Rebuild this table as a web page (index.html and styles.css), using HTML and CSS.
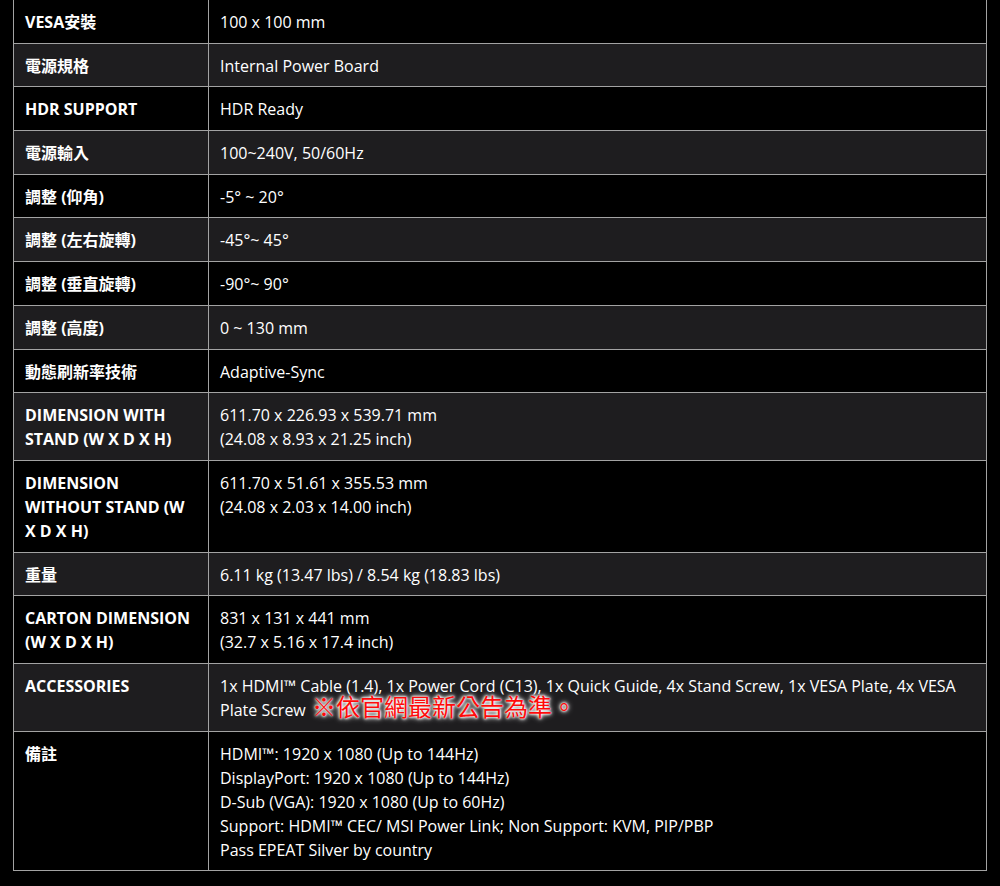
FILE: index.html
```html
<!DOCTYPE html>
<html lang="zh-Hant">
<head>
  <meta charset="UTF-8" />
  <meta name="viewport" content="width=device-width, initial-scale=1.0"/>
  <title>規格</title>
  <link rel="stylesheet" href="styles.css">
</head>
<body>
  <table class="spec">
    <tr><th>VESA安裝</th><td>100 x 100 mm</td></tr>
    <tr><th>電源規格</th><td>Internal Power Board</td></tr>
    <tr><th>HDR SUPPORT</th><td>HDR Ready</td></tr>
    <tr><th>電源輸入</th><td>100~240V, 50/60Hz</td></tr>
    <tr><th>調整 (仰角)</th><td>-5° ~ 20°</td></tr>
    <tr><th>調整 (左右旋轉)</th><td>-45°~ 45°</td></tr>
    <tr><th>調整 (垂直旋轉)</th><td>-90°~ 90°</td></tr>
    <tr><th>調整 (高度)</th><td>0 ~ 130 mm</td></tr>
    <tr><th>動態刷新率技術</th><td>Adaptive-Sync</td></tr>
    <tr><th>DIMENSION WITH STAND (W X D X H)</th><td>611.70 x 226.93 x 539.71 mm<br>(24.08 x 8.93 x 21.25 inch)</td></tr>
    <tr><th>DIMENSION WITHOUT STAND (W X D X H)</th><td>611.70 x 51.61 x 355.53 mm<br>(24.08 x 2.03 x 14.00 inch)</td></tr>
    <tr><th>重量</th><td>6.11 kg (13.47 lbs) / 8.54 kg (18.83 lbs)</td></tr>
    <tr><th>CARTON DIMENSION (W X D X H)</th><td>831 x 131 x 441 mm<br>(32.7 x 5.16 x 17.4 inch)</td></tr>
    <tr><th>ACCESSORIES</th><td>1x HDMI™ Cable (1.4), 1x Power Cord (C13), 1x Quick Guide, 4x Stand Screw, 1x VESA Plate, 4x VESA Plate Screw <span class="notice">※依官網最新公告為準。</span></td></tr>
    <tr><th>備註</th><td>HDMI™: 1920 x 1080 (Up to 144Hz)<br>DisplayPort: 1920 x 1080 (Up to 144Hz)<br>D-Sub (VGA): 1920 x 1080 (Up to 60Hz)<br>Support: HDMI™ CEC/ MSI Power Link; Non Support: KVM, PIP/PBP<br>Pass EPEAT Silver by country</td></tr>
  </table>
</body>
</html>
```

FILE: styles.css
```css
body {
  margin: 0;
  background: #000;
  color: #fff;
  font-family: 'Segoe UI', 'Open Sans', 'Noto Sans CJK TC', sans-serif;
}

.spec {
  margin-left: 13px;
  width: 974px;
  border-collapse: collapse;
  font-size: 16px;
  line-height: 24px;
}

.spec tr:nth-child(even) {
  background: #1e1d1f;
}

.spec th,
.spec td {
  border: 1px solid #a3a3a3;
  padding: 10px 11px 8.7px;
  text-align: left;
  vertical-align: top;
}

.spec tr:first-child th,
.spec tr:first-child td {
  border-top: 0;
}

.spec th {
  width: 172px;
  font-weight: bold;
}

.notice {
  margin-left: 2px;
  font-family: 'Noto Sans CJK TC', sans-serif;
  font-size: 24px;
  line-height: 0;
  color: #ff0a0a;
  text-shadow: 0 0 2px #fff, 0 0 3px #fff, 0 0 4px #fff, 0 0 6px #fff;
}
```
